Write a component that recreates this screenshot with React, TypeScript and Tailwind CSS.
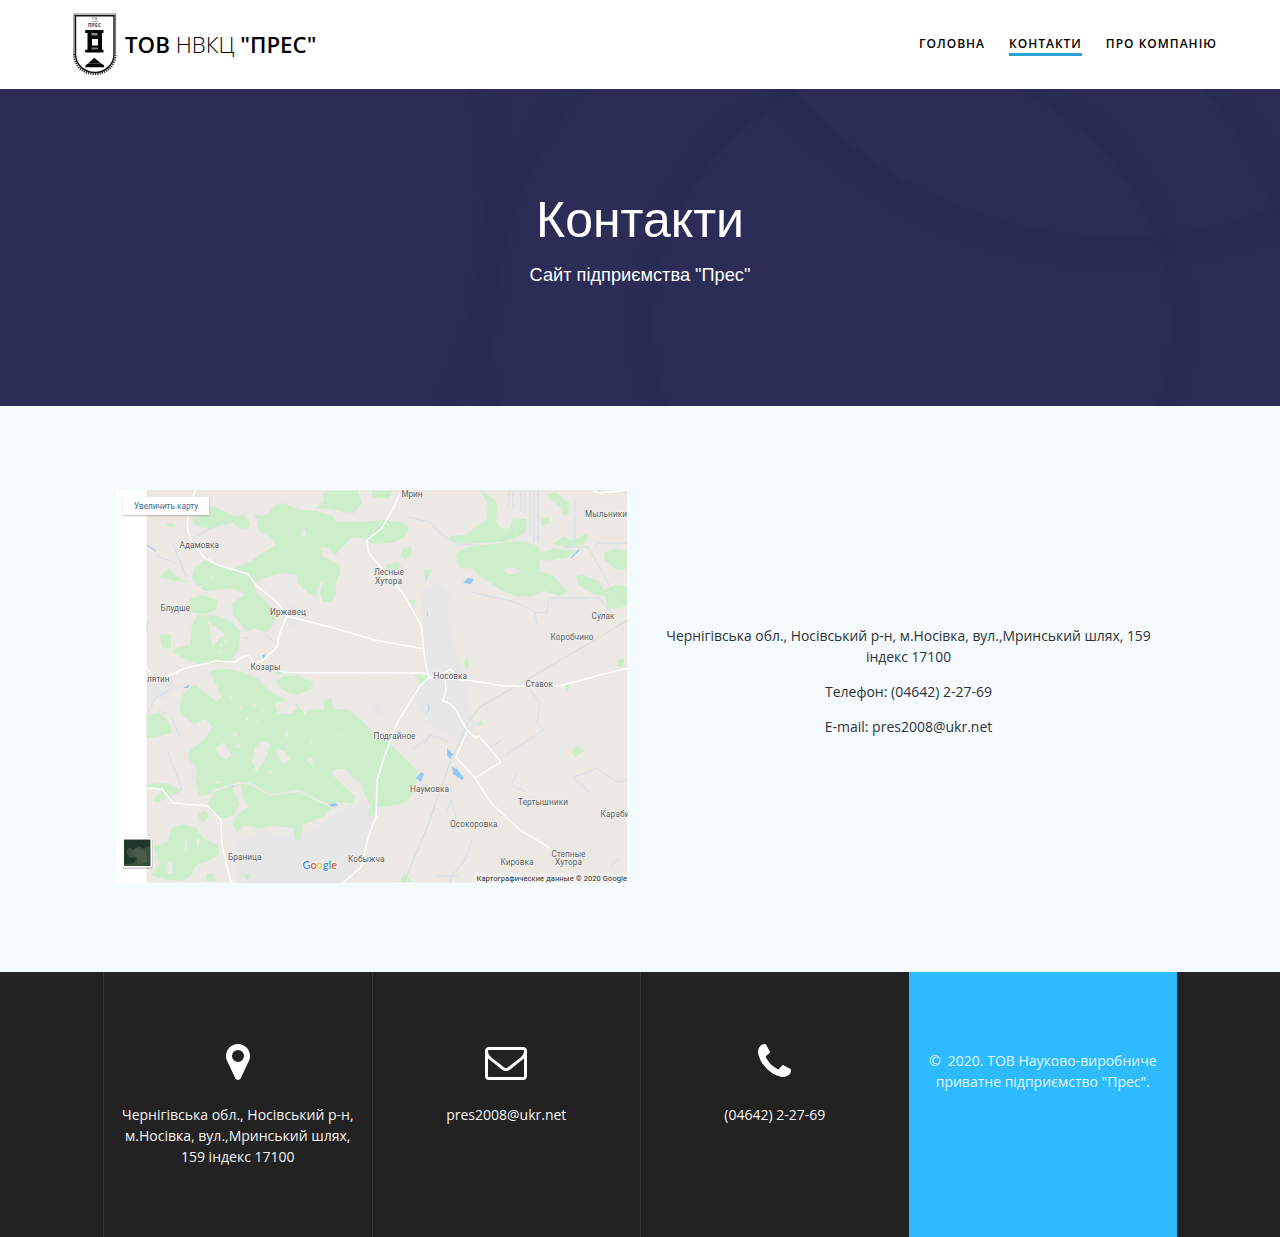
import React from "react";

const GLYPHS = {
  marker: {
    w: 1024,
    d: "M768 896q0 106 -75 181t-181 75t-181 -75t-75 -181t75 -181t181 -75t181 75t75 181zM1024 896q0 -109 -33 -179l-364 -774q-16 -33 -47.5 -52t-67.5 -19t-67.5 19t-46.5 52l-365 774q-33 70 -33 179q0 212 150 362t362 150t362 -150t150 -362z",
  },
  envelope: {
    w: 1792,
    d: "M1664 32v768q-32 -36 -69 -66q-268 -206 -426 -338q-51 -43 -83 -67t-86.5 -48.5t-102.5 -24.5h-1h-1q-48 0 -102.5 24.5t-86.5 48.5t-83 67q-158 132 -426 338q-37 30 -69 66v-768q0 -13 9.5 -22.5t22.5 -9.5h1472q13 0 22.5 9.5t9.5 22.5zM1664 1083v11v13.5t-0.5 13t-3 12.5t-5.5 9t-9 7.5t-14 2.5h-1472q-13 0 -22.5 -9.5t-9.5 -22.5q0 -168 147 -284q193 -152 401 -317q6 -5 35 -29.5t46 -37.5t44.5 -31.5t50.5 -27.5t43 -9h1h1q20 0 43 9t50.5 27.5t44.5 31.5t46 37.5t35 29.5q208 165 401 317q54 43 100.5 115.5t46.5 131.5zM1792 1120v-1088q0 -66 -47 -113t-113 -47h-1472q-66 0 -113 47t-47 113v1088q0 66 47 113t113 47h1472q66 0 113 -47t47 -113z",
  },
  phone: {
    w: 1408,
    d: "M1408 296q0 -27 -10 -70.5t-21 -68.5q-21 -50 -122 -106q-94 -51 -186 -51q-27 0 -53 3.5t-57.5 12.5t-47 14.5t-55.5 20.5t-49 18q-98 35 -175 83q-127 79 -264 216t-216 264q-48 77 -83 175q-3 9 -18 49t-20.5 55.5t-14.5 47t-12.5 57.5t-3.5 53q0 92 51 186q56 101 106 122q25 11 68.5 21t70.5 10q14 0 21 -3q18 -6 53 -76q11 -19 30 -54t35 -63.5t31 -53.5q3 -4 17.5 -25t21.5 -35.5t7 -28.5q0 -20 -28.5 -50t-62 -55t-62 -53t-28.5 -46q0 -9 5 -22.5t8.5 -20.5t14 -24t11.5 -19q76 -137 174 -235t235 -174q2 -1 19 -11.5t24 -14t20.5 -8.5t22.5 -5q18 0 46 28.5t53 62t55 62t50 28.5q14 0 28.5 -7t35.5 -21.5t25 -17.5q25 -15 53.5 -31t63.5 -35t54 -30q70 -35 76 -53q3 -7 3 -21z",
  },
};

function Glyph({ name }: { name: keyof typeof GLYPHS }) {
  const g = GLYPHS[name];
  return (
    <svg className="h-9 text-white" viewBox={`0 0 ${g.w} 1536`} fill="currentColor" aria-hidden="true">
      <path transform="translate(0 1408) scale(1 -1)" d={g.d} />
    </svg>
  );
}

function Emblem() {
  return (
    <svg className="h-[63px] w-[44px]" viewBox="0 0 44 63" aria-hidden="true">
      <path d="M1 41V1H42.500V41" fill="#fff" stroke="#777" strokeWidth="1.200" />
      <path d="M1 41C1 53 10 61 21.800 61S42.500 53 42.500 41" fill="#fff" stroke="#333" strokeWidth="2" strokeDasharray="1.3 1" />
      <path d="M2.500 2.700H41V41C41 52 32 59.500 21.800 59.500S2.500 52 2.500 41Z" fill="none" stroke="#111" strokeWidth="1.400" />
      <g fontFamily="Open Sans, sans-serif" textAnchor="middle" fill="#333">
        <text x="21.500" y="6.800" fontSize="2.800">ТОВ</text>
        <text x="21.500" y="9.300" fontSize="2.500">НВКЦ</text>
        <text x="21.700" y="13.700" fontSize="4.600" fontWeight="700" letterSpacing="0.400">ПРЕС</text>
      </g>
      <path d="M12.200 17H30.500V20H29V36.800H30.500V39.500H12.200V36.800H14.500V20H12.200Z" fill="#050505" />
      <path d="M18.500 20H24.500V22.500H18.500Z" fill="#888" />
      <path d="M19 26H25V32.500H19Z" fill="#fff" />
      <path d="M18.500 34.500H25V36.500H18.500Z" fill="#777" />
      <path d="M21.300 44.800L27.500 50H15.500Z" fill="#050505" />
      <path d="M15.500 50.300H28L31 52.300V54.300H12.500V52.300Z" fill="#050505" />
    </svg>
  );
}

function HeroRings() {
  return (
    <svg className="absolute inset-0 size-full" viewBox="0 89 1280 317" preserveAspectRatio="none" aria-hidden="true">
      <defs>
        <radialGradient id="ringA" gradientUnits="userSpaceOnUse" cx="912" cy="325" r="288">
          <stop offset="0.885" stopColor="#262950" stopOpacity="0" />
          <stop offset="0.905" stopColor="#262950" stopOpacity="0.75" />
          <stop offset="1" stopColor="#262950" stopOpacity="0" />
        </radialGradient>
        <radialGradient id="ringB" gradientUnits="userSpaceOnUse" cx="1118" cy="-191" r="464">
          <stop offset="0.918" stopColor="#262950" stopOpacity="0" />
          <stop offset="0.93" stopColor="#262950" stopOpacity="0.75" />
          <stop offset="1" stopColor="#262950" stopOpacity="0" />
        </radialGradient>
        <radialGradient id="ringC" gradientUnits="userSpaceOnUse" cx="895" cy="345" r="435">
          <stop offset="0.914" stopColor="#262950" stopOpacity="0" />
          <stop offset="0.926" stopColor="#262950" stopOpacity="0.65" />
          <stop offset="1" stopColor="#262950" stopOpacity="0" />
        </radialGradient>
        <radialGradient id="ringD" gradientUnits="userSpaceOnUse" cx="30" cy="200" r="490">
          <stop offset="0.914" stopColor="#262950" stopOpacity="0" />
          <stop offset="0.93" stopColor="#262950" stopOpacity="0.5" />
          <stop offset="1" stopColor="#262950" stopOpacity="0" />
        </radialGradient>
      </defs>
      <circle cx="912" cy="325" r="288" fill="url(#ringA)" />
      <circle cx="1118" cy="-191" r="464" fill="url(#ringB)" />
      <circle cx="895" cy="345" r="435" fill="url(#ringC)" />
      <circle cx="30" cy="200" r="490" fill="url(#ringD)" />
    </svg>
  );
}

const LABELS: [string, number, number, number][] = [
  ["Мрин", 401.5, 497, 21],
  ["Адамовка", 179.500, 547.5, 39.5],
  ["Лесные", 374, 575, 30],
  ["Хутора", 375, 583.500, 27],
  ["Блудше", 160.500, 611, 29.5],
  ["Иржавец", 270, 615, 36],
  ["Сулак", 591.500, 619, 23],
  ["Коробчино", 550.500, 640, 43],
  ["Козары", 250.500, 670, 30],
  ["Носовка", 433.500, 678.500, 33.5],
  ["Ставок", 525.500, 686.500, 27.5],
  ["Подгайное", 373.500, 738.500, 42],
  ["Наумовка", 410, 792, 39],
  ["Тертышники", 518, 804.500, 50],
  ["Осокоровка", 450, 827.300, 47.5],
  ["Степные", 551.500, 856.500, 34],
  ["Хутора", 555, 865, 27],
  ["Кировка", 500.500, 865, 33],
  ["Браница", 228, 860, 33.5],
  ["Кобыжча", 348, 862, 36.5],
  ["Мыльники", 585, 517, 42],
  ["лятин", 147, 682, 22.5],
  ["Караби", 600.500, 817, 29],
];

function RegionMap() {
  return (
    <svg className="block size-full" viewBox="116 490 512 393" aria-hidden="true">
      <rect x="116" y="490" width="31" height="393" fill="#fff" />
      <rect x="146.500" y="490" width="480.500" height="392.500" fill="#ece9e5" />

      {/* built-up areas */}
      <g fill="#e8e7e8">
        <path d="M421 590L440 583 450 592 447 620 456 650 466 680 468 702 475 725 470 745 450 736 425 720 412 695 426 672Z" />
        <path d="M235 842L262 832 300 836 345 808 365 797 372 820 366 850 345 883 238 883Z" />
        <path d="M286 600L300 608 306 616 296 628 284 622Z" />
        <path d="M147 685L170 680 180 686 166 698 147 696Z" />
        <path d="M370 706L378 704 384 710 378 716 372 714Z" />
      </g>

      {/* forests */}
      <g transform="translate(116 488) scale(0.33333)" fill="#cdeecb">
        <path d="M228 95L240 85 270 55 310 60 335 75 350 85 385 82 402 105 395 122 375 122 350 105 320 112 290 122 255 118 235 110Z" />
        <path d="M414 78L440 85 455 78 475 50 505 45 520 55 560 65 600 68 650 85 665 102 745 102 790 95 860 102 880 118 868 145 830 165 770 168 740 150 705 150 690 165 655 205 640 180 612 178 618 205 672 230 672 255 660 285 662 320 645 340 620 342 612 315 622 280 608 290 600 325 580 318 545 285 545 262 500 255 465 265 430 275 412 290 422 310 405 325 345 300 310 305 270 310 242 290 228 270 235 240 265 215 295 230 345 245 410 215 440 195 478 170 462 148 430 130 425 100Z" />
        <path d="M598 60L625 40 620 15 635 8H725L738 45 715 75 680 72 640 62Z" />
        <path d="M765 8H828L820 32 770 28Z" />
        <path d="M225 330L260 322 305 335 300 365 265 380 225 372 215 345Z" />
        <path d="M245 380L310 385 350 405 372 430 370 480 345 518 285 528 240 528 200 510 165 490 180 480 222 472 228 410Z" />
        <path d="M350 345L385 320 410 305 440 330 475 365 482 380 470 410 455 432 415 422 390 432 372 405 350 380Z" />
        <path d="M130 440L165 438 165 482 140 478Z" />
        <path d="M128 268L160 240 175 262 215 282 180 280Z" />
        <path d="M148 108L172 108 178 116 152 114Z" />
        <path d="M92 398L98 405 95 430H92Z" />
        <path d="M480 580L500 565 540 560 592 582 585 605 545 620 510 612 490 598Z" />
        <path d="M478 552H530L520 560 482 558Z" />
        <path d="M1095 8L1135 35 1145 55 1140 100 1155 122 1180 120 1190 95 1232 92 1230 130 1205 148 1165 162 1090 165 1045 168 1010 165 998 145 1050 140 1080 115 1112 95 1115 50Z" />
        <path d="M1018 198L1045 180 1090 172 1180 162 1225 160 1268 175 1270 195 1310 182 1390 188 1355 208 1300 218 1272 215 1270 250 1310 262 1355 310 1330 325 1285 308 1250 325 1200 325 1160 310 1130 290 1085 262 1075 242 1030 240Z" />
        <path d="M1295 20L1315 12 1360 45 1358 80 1340 82 1330 55 1305 40Z" />
        <path d="M1275 95L1298 85 1300 105 1278 115Z" />
        <path d="M1308 168L1345 145 1365 158 1415 135 1410 165 1360 178Z" />
        <path d="M1465 192L1500 182 1532 188V242L1500 245 1465 215Z" />
        <path d="M1380 265L1400 260 1450 280 1462 305 1500 290 1532 295V355L1500 362 1475 360 1468 325 1425 315 1385 290Z" />
        <path d="M852 205L862 182 885 175 888 195 870 215Z" />
        <path d="M810 232L845 222 858 240 815 250Z" />
        <path d="M925 245L948 244 928 285Z" />
        <path d="M880 335L898 335 895 362Z" />
        <path d="M1042 518L1055 512 1062 535 1050 545Z" />
        <path d="M890 560L935 565 915 588 905 572Z" />
        <path d="M1505 515L1525 512 1522 538 1502 532Z" />
        <path d="M1345 592L1365 585 1355 612Z" />
        <path d="M282 548L330 542 380 552 430 575 450 600 480 620 520 640 600 665 625 662 622 635 648 632 652 662 700 665 745 705 770 730 820 765 860 805 905 850 898 905 870 945 780 960 775 982 755 985 762 950 745 918 740 890 710 870 690 842 660 845 645 855 690 900 718 925 710 945 660 942 625 985 560 1010 555 1055H535L532 1020 470 1015 430 1022 380 1012 365 1035 352 1010 358 985 400 955 380 930 375 890 348 900 372 945 355 980 320 992 285 975 272 950 295 915 250 925 240 880 242 840 215 810 222 785 265 755 290 715 265 692 235 710 195 678 190 660 200 620 235 590 262 610 300 640 318 630 300 590Z" />
        <path d="M92 685L125 672 150 690 170 730 150 742 92 750Z" />
        <path d="M92 888L150 885 195 905 125 945 108 938 140 905 92 900Z" />
        <path d="M248 975L270 970 278 985 262 1002 250 995Z" />
        <path d="M112 1075L155 1062 165 1022 195 1008 240 1020 262 1050 305 1070 308 1100 270 1122 240 1132 225 1162 200 1178 145 1175 105 1160 130 1130Z" />
        <path d="M270 1158L288 1155 302 1180H270ZM382 1158H402L395 1180Z" />
        <path d="M1365 792L1382 775 1405 788 1378 808ZM1082 708L1095 695 1102 708 1085 716ZM850 1182L865 1155 885 1182Z" />
      </g>

      {/* forest clearings */}
      <g transform="translate(116 488) scale(0.33333)" fill="#ece9e5">
        <path d="M275 400L295 415 330 440 310 450 290 478 285 440Z" />
        <path d="M475 650L500 640 530 640 545 660 525 678 485 675Z" />
        <path d="M545 650L575 642 585 660 565 680Z" />
        <path d="M408 820L418 775 445 758 462 768 450 810 420 850Z" />
        <path d="M300 780L325 762 345 800 330 815 308 800Z" />
        <path d="M480 792L500 785 522 815 500 830Z" />
        <path d="M570 815L585 808 595 840Z" />
        <path d="M555 145L562 118 572 140Z" />
        <path d="M508 730L515 715 518 748 505 745Z" />
        <path d="M205 1060L215 1055 210 1095ZM240 1055L252 1052 245 1085ZM155 1125L168 1118 170 1155 155 1155Z" />
        <path d="M340 630l10-4-4 10zM370 655h6v8h-6zM410 650h7v5h-7zM440 665l8 8-8 2zM580 762l9-6v9zM665 740h7v6h-7zM510 770h8v8h-8zM300 880h9v5h-9zM460 850h8l-3 8zM245 865l18-4-12 8zM390 690h6v8h-6zM350 740l14-8-4 18zM360 770l14 2-8 8zM325 455h8l-4 10zM310 470l10-3-3 10zM305 490h8l-3 9zM250 290l9 3-5 6zM285 268h6v6h-6zM1160 242l36-3 18 12-24 8-18-4zM640 700l6 4-6 3zM420 700h5v5h-5zM320 690l5 4-5 4zM345 850h5l-2 5zM385 735l6 3-5 3z" />
      </g>

      {/* water */}
      <g fill="none" stroke="#bfd8ec" strokeWidth="0.600">
        <path d="M147 545L156 551" stroke="#a5cdee" strokeWidth="1.400" />
        <path d="M157 556L176 563M173 544L176 553 187 577M190 540L225 520" />
        <path d="M408 517L430 522 440 533 450 540M471 592L480 594 507 600 515 602 535 612 537 624M537 612L547 613 549 598H600L610 612" />
        <path d="M509 491V507M513 491V510M521 491V512M525 491V514M530 491V537M534 491V542M538 491V542M575 500V545M455 545H480M500 542L512 534 514 528M563 547H588M588 547L600 568 612 590 620 597M594 547L599 543H628" />
        <path d="M571 558L579 550" stroke="#9cc8ef" strokeWidth="1.200" />
        <path d="M170 713L179 735M168 752L182 790 170 797M147 715L155 698 170 690M158 710L165 714" />
        <path d="M530 690L540 703 537 722 544 730 510 752 505 757M490 748L502 740M424 745L430 735 440 738 448 742M412 750L427 738" />
        <path d="M573 777L583 774 597 768 605 774 617 782 627 780M573 778L590 792M512 783L518 772M513 786L526 792M447 810L451 800 456 818M472 840L464 862 452 875 450 883" />
        <path d="M266 635L273 641M243 638H249M437 876H458M610 868L620 858" />
        <path d="M428 704l1 6-3 3" stroke="#8fc0f0" />
      </g>
      <g fill="#94c8f5">
        <path d="M463 583L468 578 474 579 471 584Z" />
        <path d="M447 748L453 754 450 759 447 755Z" />
        <path d="M416 778L421 772 424 774 421 782Z" />
        <path d="M452 767L457 769 464 778 462 780 453 774Z" />
        <path d="M328 805L335 803 338 805 333 807Z" />
        <path d="M228 786L234 784 233 787Z" />
        <path d="M262 656L266 653 264 659Z" />
        <path d="M183 688L190 684 188 688Z" />
        <path d="M427 611l1 4-1 1z" />
      </g>

      {/* railway */}
      <path d="M404 883L430 820 449 765 468 722 480 707 520 684 555 663 590 643 628 620" fill="none" stroke="#cfe0d0" strokeWidth="1" />

      {/* roads */}
      <g fill="none" stroke="#fff" strokeWidth="1.400" strokeLinejoin="round">
        <path d="M195 490L188 515 187 528 192 542 205 558 218 565 248 574 257 586 278 603 287 616" />
        <path d="M287 616L280 632 277 647 263 660 254 664 249 655 242 657 235 662 216 661 183 669 168 676M147 668L152 676" />
        <path d="M287 616L330 627 375 640 424 649" />
        <path d="M262 664L285 672.500 425 673 433 678 466 680 505 686 560 686 600 675 628 668" />
        <path d="M400 493L395 505 382 528 367 540 368 552 385 572 402 592 421 625 425 660 429 678" />
        <path d="M430 677L420 686 397 723 385 755 377 780 376 817 369 835 361 867 343 883" />
        <path d="M429 678L446 672 450 669 454 673M445 678L446 690 443 701 449 703 455 708 467 730 475 738 479 736 501 762 475 778 456 757 467 732" />
        <path d="M475 778L491 803 520 830 550 848" />
        <path d="M147 788L162 789 173 803 208 806 221 820 222 845 231 883" />
        <path d="M198 802L215 790 240 783 251 784 270 795 300 791 315 799 330 806" stroke="#ece9e5" />
        <path d="M593 491L600 493 628 490" />
      </g>

      {/* settlement names */}
      <g fontFamily="Roboto, sans-serif" fontSize="8.300" fill="#5a5e63" stroke="#f3f1ef" strokeWidth="1.200" paintOrder="stroke">
        {LABELS.map(([name, x, y, width]) => (
          <text key={name + x} x={x} y={y} textLength={width}>{name}</text>
        ))}
      </g>

      <g fontFamily="Roboto, sans-serif">
        <rect x="474" y="873.500" width="153" height="9" fill="#f3f1ef" fillOpacity="0.800" />
        <text x="476.500" y="880.500" fontSize="7.500" fill="#333" textLength="150.500">Картографические данные © 2020 Google</text>
      </g>
      <text x="302.500" y="868.500" fontFamily="Lato, sans-serif" fontSize="11" fontWeight="600" textLength="34.500" stroke="#fff" strokeWidth="1.500" paintOrder="stroke">
        <tspan fill="#4285f4">G</tspan>
        <tspan fill="#ea4335">o</tspan>
        <tspan fill="#fbbc05">o</tspan>
        <tspan fill="#4285f4">g</tspan>
        <tspan fill="#34a853">l</tspan>
        <tspan fill="#ea4335">e</tspan>
      </text>

      {/* satellite toggle */}
      <rect x="122.500" y="839" width="30" height="30" rx="1.500" fill="#000" fillOpacity="0.200" />
      <rect x="122.500" y="838" width="29.500" height="29.500" rx="1.500" fill="#fff" />
      <rect x="124" y="839.500" width="26.500" height="26.500" fill="#3b4f3e" />
      <path d="M124 840H150V846L143 848 139 846 133 850 130 847 126 852 129 857 137 858 134 863 124 864Z" fill="#1f3629" />
      <path d="M130 853L136 848 146 851 148 862 138 865 137 857Z" fill="#4a5b48" />
    </svg>
  );
}

const NAV = [
  { label: "Головна", active: false },
  { label: "Контакти", active: true },
  { label: "Про компанію", active: false },
];

function FooterCell({ icon, children }: { icon: keyof typeof GLYPHS; children: React.ReactNode }) {
  return (
    <div className="flex flex-col items-center border-l border-[#343434] px-4 pt-[72px] text-center text-[#f5f5f5]">
      <Glyph name={icon} />
      <p className="mt-6">{children}</p>
    </div>
  );
}

export default function App() {
  return (
    <div className="flex h-[1237px] w-[1280px] flex-col overflow-hidden bg-[#f5fafd] font-['Open_Sans',sans-serif] text-sm leading-[21px] text-[#2e3338]">
      <header className="flex h-[89px] shrink-0 items-center justify-between bg-white pr-[63px] pl-[73px] text-black">
        <div className="flex items-center gap-2">
          <Emblem />
          <span className="text-[22.3px] leading-8 font-semibold whitespace-nowrap">
            ТОВ <span className="font-light">НВКЦ</span> "ПРЕС"
          </span>
        </div>
        <nav className="flex gap-6 pt-px text-xs leading-[18px] font-semibold tracking-[1px] uppercase">
          {NAV.map((item) => (
            <a key={item.label} className={item.active ? "border-b-[3px] border-[#2ba3d4]" : "pb-[3px]"}>
              {item.label}
            </a>
          ))}
        </nav>
      </header>

      <section className="relative flex h-[317px] shrink-0 flex-col items-center bg-[#2b2d57] pt-[101px] text-center font-['Liberation_Sans',sans-serif] text-white">
        <HeroRings />
        <h1 className="relative text-[50px] leading-[60px]">Контакти</h1>
        <p className="relative mt-[13px] text-[18.2px] leading-6">Сайт підприємства "Прес"</p>
      </section>

      <main className="flex h-[566px] shrink-0 items-start gap-[26px] pt-[84px] pl-[116px]">
        <div className="relative h-[393px] w-[512px]">
          <RegionMap />
          <a className="absolute top-[7px] left-[7px] flex h-[18px] w-[86px] items-center justify-center rounded-[1px] bg-white font-[Roboto,sans-serif] text-[8.2px] whitespace-nowrap text-[#3a6a94] shadow-[0_1px_2px_rgba(0,0,0,0.25)]">
            Увеличить карту
          </a>
        </div>
        <div className="flex w-[509px] flex-col gap-3.5 pt-[135px] text-center">
          <p className="text-[13.9px]">
            Чернігівська обл., Носівський р-н, м.Носівка, вул.,Мринський шлях, 159
            <br />
            індекс 17100
          </p>
          <p>Телефон: (04642) 2-27-69</p>
          <p>E-mail: pres2008@ukr.net</p>
        </div>
      </main>

      <footer className="flex flex-1 justify-center bg-[#222]">
        <div className="grid w-[1074px] grid-cols-4">
          <FooterCell icon="marker">
            Чернігівська обл., Носівський р-н, м.Носівка, вул.,Мринський шлях, 159 індекс 17100
          </FooterCell>
          <FooterCell icon="envelope">pres2008@ukr.net</FooterCell>
          <FooterCell icon="phone">(04642) 2-27-69</FooterCell>
          <div className="bg-[#2ebafe] px-4 pt-[78px] text-center text-[#e0f8ff]">
            ©&nbsp; 2020. ТОВ Науково-виробниче приватне підприємство "Прес".
          </div>
        </div>
      </footer>
    </div>
  );
}
